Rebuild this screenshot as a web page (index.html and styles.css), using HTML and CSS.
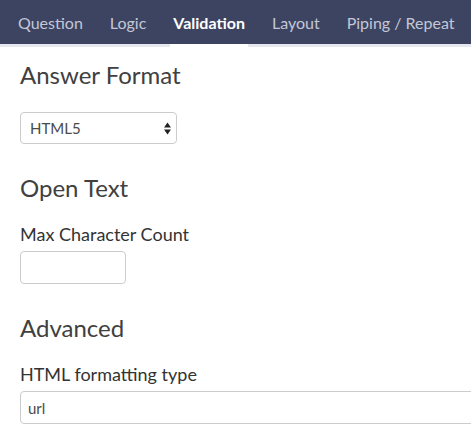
FILE: index.html
```html
<!DOCTYPE html>
<html>
<head>
<meta charset="utf-8">
<link rel="stylesheet" href="styles.css">
</head>
<body>
<nav class="tabs">
  <a class="tab">Question</a>
  <a class="tab">Logic</a>
  <a class="tab active">Validation</a>
  <a class="tab">Layout</a>
  <a class="tab">Piping / Repeat</a>
</nav>
<main class="content">
  <section class="section first">
    <h2 class="heading">Answer Format</h2>
    <div class="select">
      <span>HTML5</span>
      <svg class="caret" width="7" height="13" viewBox="0 0 7 13"><path d="M3.5 0.5 L7 5.5 L0 5.5 Z M3.5 12.5 L7 7.5 L0 7.5 Z" fill="#222"/></svg>
    </div>
  </section>
  <section class="section">
    <h2 class="heading">Open Text</h2>
    <label class="label">Max Character Count</label>
    <div class="input small"></div>
  </section>
  <section class="section">
    <h2 class="heading">Advanced</h2>
    <label class="label">HTML formatting type</label>
    <div class="input wide">url</div>
  </section>
</main>
</body>
</html>
```
FILE: styles.css
```css
html, body {
  margin: 0;
  padding: 0;
  background: #fff;
  overflow: hidden;
}
body {
  font-family: Lato, "Open Sans", sans-serif;
  color: #333;
}
.tabs {
  display: flex;
  gap: 21px;
  height: 44px;
  padding-left: 15px;
  background: #3d4462;
  border-bottom: 3px solid #e6e8ef;
}
.tab {
  display: flex;
  align-items: center;
  padding: 1px 3px 0;
  font-size: 16px;
  color: #c3c7d6;
  position: relative;
}
.tab.active {
  color: #fff;
  font-weight: 700;
}
.tab.active::after {
  content: "";
  position: absolute;
  left: 0;
  right: 0;
  bottom: -3px;
  height: 3px;
  background: #fff;
}
.content {
  padding-left: 20px;
}
.section {
  margin-top: 30px;
}
.section.first {
  margin-top: 14px;
}
.heading {
  margin: 0 0 22px;
  font-size: 24px;
  line-height: 28px;
  font-weight: 400;
  color: #404040;
}
.section.first .heading {
  margin-bottom: 23px;
}
.label {
  display: block;
  margin-bottom: 6px;
  font-size: 18px;
  line-height: 21px;
  color: #333;
}
.select {
  box-sizing: border-box;
  width: 157px;
  height: 32px;
  display: flex;
  align-items: center;
  justify-content: space-between;
  padding: 0 5px 0 9px;
  border: 1px solid #ccc;
  border-radius: 4px;
  font-size: 15px;
  color: #4a4a4a;
}
.caret {
  display: block;
}
.input {
  box-sizing: border-box;
  height: 33px;
  border: 1px solid #ccc;
  border-radius: 4px;
  font-size: 15px;
  color: #4a4a4a;
  display: flex;
  align-items: center;
  padding-left: 7px;
}
.input.small {
  width: 106px;
}
.input.wide {
  width: 470px;
}
```
